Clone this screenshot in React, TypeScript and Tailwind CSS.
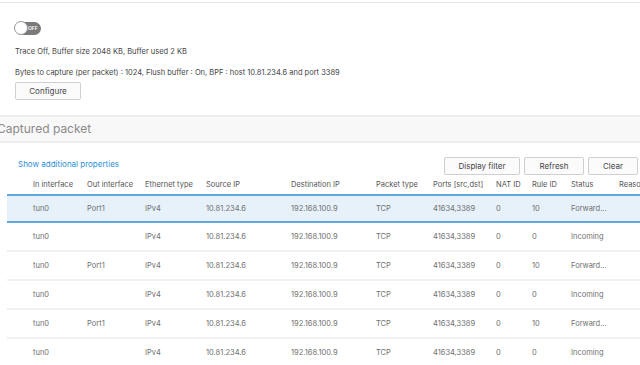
import React from "react";

const cols = [
  { key: "in", label: "In interface", w: "w-[54px]" },
  { key: "out", label: "Out interface", w: "w-[58px]" },
  { key: "eth", label: "Ethernet type", w: "w-[61px]" },
  { key: "src", label: "Source IP", w: "w-[85px]" },
  { key: "dst", label: "Destination IP", w: "w-[85px]" },
  { key: "pkt", label: "Packet type", w: "w-[57px]" },
  { key: "ports", label: "Ports [src,dst]", w: "w-[63px]" },
  { key: "nat", label: "NAT ID", w: "w-[36px]" },
  { key: "rule", label: "Rule ID", w: "w-[39px]" },
  { key: "status", label: "Status", w: "w-[48px]" },
  { key: "reason", label: "Reason", w: "w-[80px]" },
];

type Row = Record<string, string>;

const rows: Row[] = [0, 1, 2, 3, 4, 5].map((i) => {
  const fwd = i % 2 === 0;
  return {
    in: "tun0",
    out: fwd ? "Port1" : "",
    eth: "IPv4",
    src: "10.81.234.6",
    dst: "192.168.100.9",
    pkt: "TCP",
    ports: "41634,3389",
    nat: "0",
    rule: fwd ? "10" : "0",
    status: fwd ? "Forward..." : "Incoming",
    reason: "",
  };
});

function Toggle() {
  return (
    <div className="relative w-[26px] h-[13px] rounded-full bg-[#7a7a7a] flex items-center">
      <div className="absolute left-[-1px] top-[-1px] w-[14px] h-[14px] rounded-full bg-white border border-[#9a9a9a]" />
      <span className="ml-[13px] text-[5px] leading-none text-white font-semibold">OFF</span>
    </div>
  );
}

function Btn({ children, w }: { children: React.ReactNode; w: string }) {
  return (
    <button className={`${w} h-[18px] shrink-0 border border-[#cfcfcf] rounded-[2px] bg-[#fbfbfb] text-[8px] text-[#444]`}>
      {children}
    </button>
  );
}

export default function App() {
  return (
    <div
      className="w-[640px] h-[365px] overflow-hidden bg-white text-[#444]"
      style={{ fontFamily: "Inter, 'Liberation Sans', sans-serif" }}
    >
      <div className="mt-[2px] border-t border-[#e6e6e6] px-[15px] pt-[19px]">
        <Toggle />
        <div className="mt-[12px] text-[7.5px] leading-[10px] whitespace-nowrap">
          Trace Off, Buffer size 2048 KB, Buffer used 2 KB
        </div>
        <div className="mt-[11px] text-[7.5px] leading-[10px] whitespace-nowrap">
          Bytes to capture (per packet) : 1024, Flush buffer : On, BPF : host 10.81.234.6 and port 3389
        </div>
        <button className="block mt-[4px] w-[66px] h-[18px] border border-[#cfcfcf] rounded-[2px] bg-[#fbfbfb] text-[8px] text-[#444]">
          Configure
        </button>
      </div>

      <div className="mt-[15px] h-[28px] border-y-2 border-[#ededed] bg-[#f8f8f8] flex items-center">
        <span className="ml-[-3px] text-[12px] text-[#8a8a8a]">Captured packet</span>
      </div>

      <div className="flex items-end pl-[18px] pr-[2px] mt-[14px]">
        <a className="text-[8px] text-[#2d8fd5] mb-[5px]">Show additional properties</a>
        <div className="ml-auto flex gap-[4px]">
          <Btn w="w-[76px]">Display filter</Btn>
          <Btn w="w-[60px]">Refresh</Btn>
          <Btn w="w-[50px]">Clear</Btn>
        </div>
      </div>

      <div className="ml-[7px] mt-[1px] w-[720px]">
        <div className="flex h-[18px] items-center text-[7.5px] text-[#555]">
          <div className="w-[26px] shrink-0" />
          {cols.map((c) => (
            <div key={c.key} className={`${c.w} shrink-0 whitespace-nowrap`}>
              {c.label}
            </div>
          ))}
        </div>
        {rows.map((r, i) => (
          <div
            key={i}
            className={`flex items-center text-[7.5px] text-[#707070] ${
              i === 0
                ? "h-[29px] bg-[#e7f1fa] border-y-2 border-[#62a8dc]"
                : "h-[29px] border-b-2 border-[#f0f0f0]"
            }`}
          >
            <div className="w-[26px] shrink-0" />
            {cols.map((c) => (
              <div key={c.key} className={`${c.w} shrink-0 whitespace-nowrap`}>
                {r[c.key]}
              </div>
            ))}
          </div>
        ))}
      </div>
    </div>
  );
}
